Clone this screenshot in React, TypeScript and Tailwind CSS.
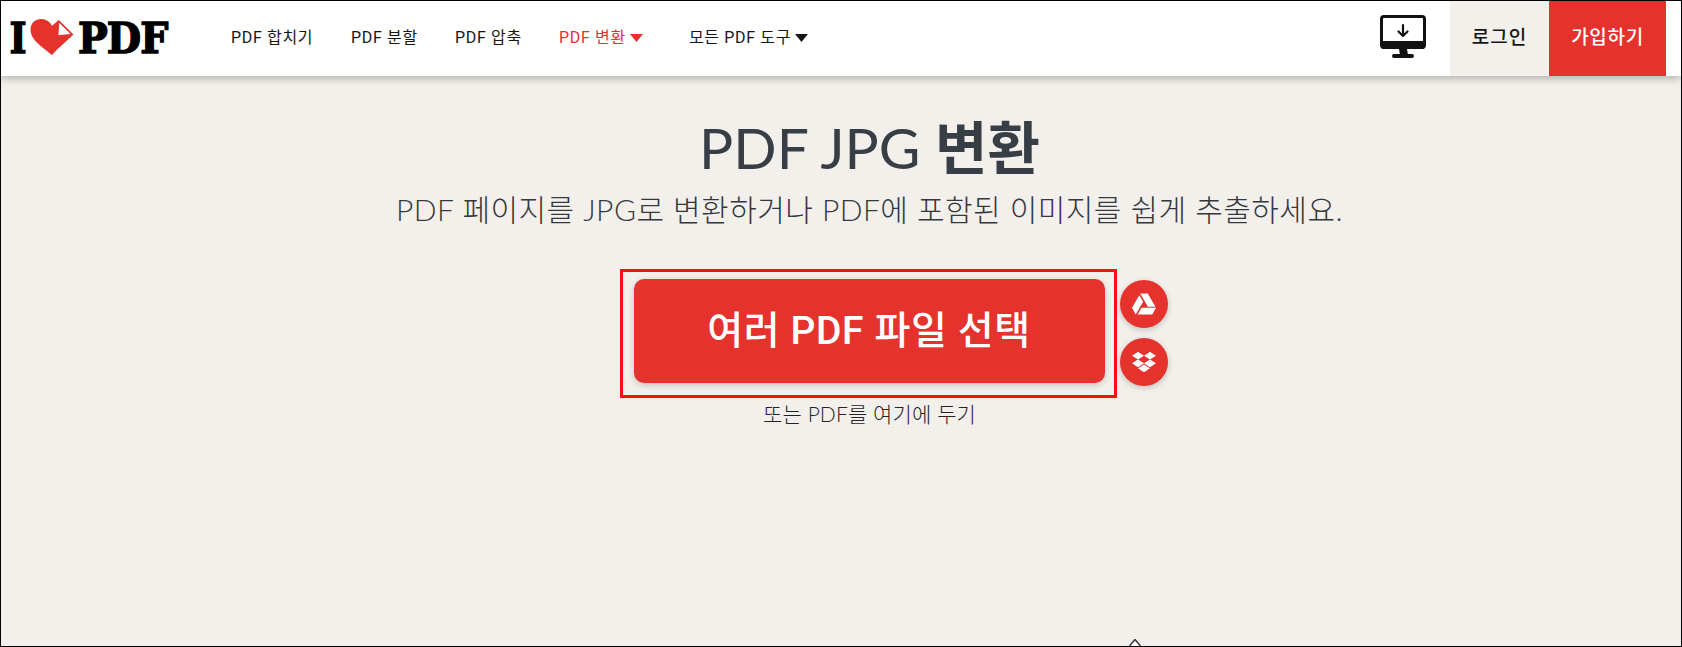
import { FaDropbox, FaGoogleDrive } from 'react-icons/fa';

const navFont = { fontFamily: 'Roboto, "Noto Sans CJK KR", sans-serif' };

function Caret({ className }: { className: string }) {
  return (
    <svg viewBox="0 0 13 8" className={`w-[13px] h-[8px] ${className}`}>
      <path d="M0 0h13L6.5 8z" fill="currentColor" />
    </svg>
  );
}

function Logo() {
  return (
    <div className="flex items-center w-[158px] h-[40px] ml-[7px] text-black font-['DejaVu_Serif','Liberation_Serif',serif] font-black text-[43px] leading-none [-webkit-text-stroke:1.5px_black]">
      <span className="w-[21px] flex justify-center scale-x-[0.85]">I</span>
      <svg viewBox="0 0 46 40" className="w-[46px] h-[39px] ml-[1px] -mt-[2px] shrink-0">
        <path d="M23 38C14 30 1 23 1 12 1 5 6 1 12 1c5 0 9 3 11 7l7-6 15 15C38 24 29 31 23 38z" fill="#e5322d" />
        <path d="M30 4l13 13-14 1z" fill="#fff" stroke="#e5322d" strokeWidth="1" />
      </svg>
      <span className="scale-x-[0.92] origin-left ml-[3px] tracking-[-1px]">PDF</span>
    </div>
  );
}

function MonitorIcon() {
  return (
    <svg viewBox="0 0 46 44" className="w-[46px] h-[44px] text-[#111]">
      <rect x="1.5" y="1.5" width="43" height="31" rx="2.5" fill="#fff" stroke="currentColor" strokeWidth="3" />
      <path d="M1 26h44v5a3 3 0 0 1-3 3H4a3 3 0 0 1-3-3z" fill="currentColor" />
      <path d="M19 34h8l1 6h-8z" fill="currentColor" />
      <rect x="12" y="39" width="22" height="4" rx="2" fill="currentColor" />
      <path d="M23 10v11M18.5 16.5L23 21l4.5-4.5" fill="none" stroke="currentColor" strokeWidth="2.2" strokeLinecap="round" strokeLinejoin="round" />
    </svg>
  );
}

export default function App() {
  return (
    <div className="h-[647px] w-full border border-black bg-[#f3f0ec] flex flex-col relative overflow-hidden" style={navFont}>
      {/* Header */}
      <header className="h-[75px] shrink-0 bg-white flex items-center shadow-[0_2px_8px_rgba(0,0,0,0.3)] relative z-10 pr-[15px]">
        <Logo />
        <nav className="flex items-center text-[16px] text-[#161616] ml-[65px] -mt-[1px] tracking-[0.65px]">
          <span className="w-[120px]">PDF 합치기</span>
          <span className="w-[104px]">PDF 분할</span>
          <span className="w-[104px]">PDF 압축</span>
          <span className="w-[131px] flex items-center gap-[4px] text-[#e5322d]">PDF 변환 <Caret className="text-[#e5322d]" /></span>
          <span className="-ml-[1px] flex items-center gap-[4px]">모든 PDF 도구 <Caret className="text-[#161616]" /></span>
        </nav>
        <div className="ml-auto flex h-full items-center">
          <div className="mr-[24px] -mt-[3px]"><MonitorIcon /></div>
          <div className="w-[99px] h-full bg-[#f3f0ec] flex items-center justify-center text-[19px] font-medium text-[#161616] tracking-[1px]">로그인</div>
          <div className="w-[117px] h-full bg-[#e5322d] flex items-center justify-center text-[19px] font-medium text-white tracking-[0.7px]">가입하기</div>
        </div>
      </header>

      {/* Main */}
      <main className="flex flex-col items-center text-[#383e45] pl-[57px]">
        <h1 className="mt-[36px] text-[57px] leading-[70px] font-normal font-['Lato','Noto_Sans_CJK_KR',sans-serif]">PDF JPG <span className="font-bold">변환</span></h1>
        <p className="mt-[7px] text-[30px] leading-[40px] tracking-[0.45px] text-[#33383e] font-light font-['Lato','Noto_Sans_CJK_KR',sans-serif]">PDF 페이지를 JPG로 변환하거나 PDF에 포함된 이미지를 쉽게 추출하세요.</p>

        <div className="relative mt-[50px] mr-[1px]">
          <div className="w-[471px] h-[104px] bg-[#e5322d] rounded-[10px] shadow-[0_2px_6px_rgba(0,0,0,0.2)] flex items-center justify-center text-white text-[39px] tracking-[0.6px] font-medium">
            여러 PDF 파일 선택
          </div>
          {/* red annotation box */}
          <div className="absolute -left-[14px] -top-[10px] w-[497px] h-[129px] border-[3px] border-[#ff0f0f]" />
          <div className="absolute left-[486px] top-[1px] w-[48px] h-[48px] rounded-full bg-[#e5322d] shadow-[0_2px_6px_rgba(0,0,0,0.2)] flex items-center justify-center text-white">
            <FaGoogleDrive className="w-[24px] h-[24px]" />
          </div>
          <div className="absolute left-[486px] top-[59px] w-[48px] h-[48px] rounded-full bg-[#e5322d] shadow-[0_2px_6px_rgba(0,0,0,0.2)] flex items-center justify-center text-white">
            <FaDropbox className="w-[24px] h-[24px]" />
          </div>
        </div>

        <p className="mt-[18px] text-[21px] leading-[26px] tracking-[0.1px] text-[#1f2327] font-light font-['Lato','Noto_Sans_CJK_KR',sans-serif]">또는 PDF를 여기에 두기</p>
      </main>

      {/* cursor tip at the bottom edge */}
      <svg viewBox="0 0 12 7" className="absolute left-[1128px] bottom-0 w-[12px] h-[7px]">
        <path d="M0.5 7L6 0.5 11.5 7" fill="#fff" stroke="#333" strokeWidth="1.5" />
      </svg>
    </div>
  );
}
